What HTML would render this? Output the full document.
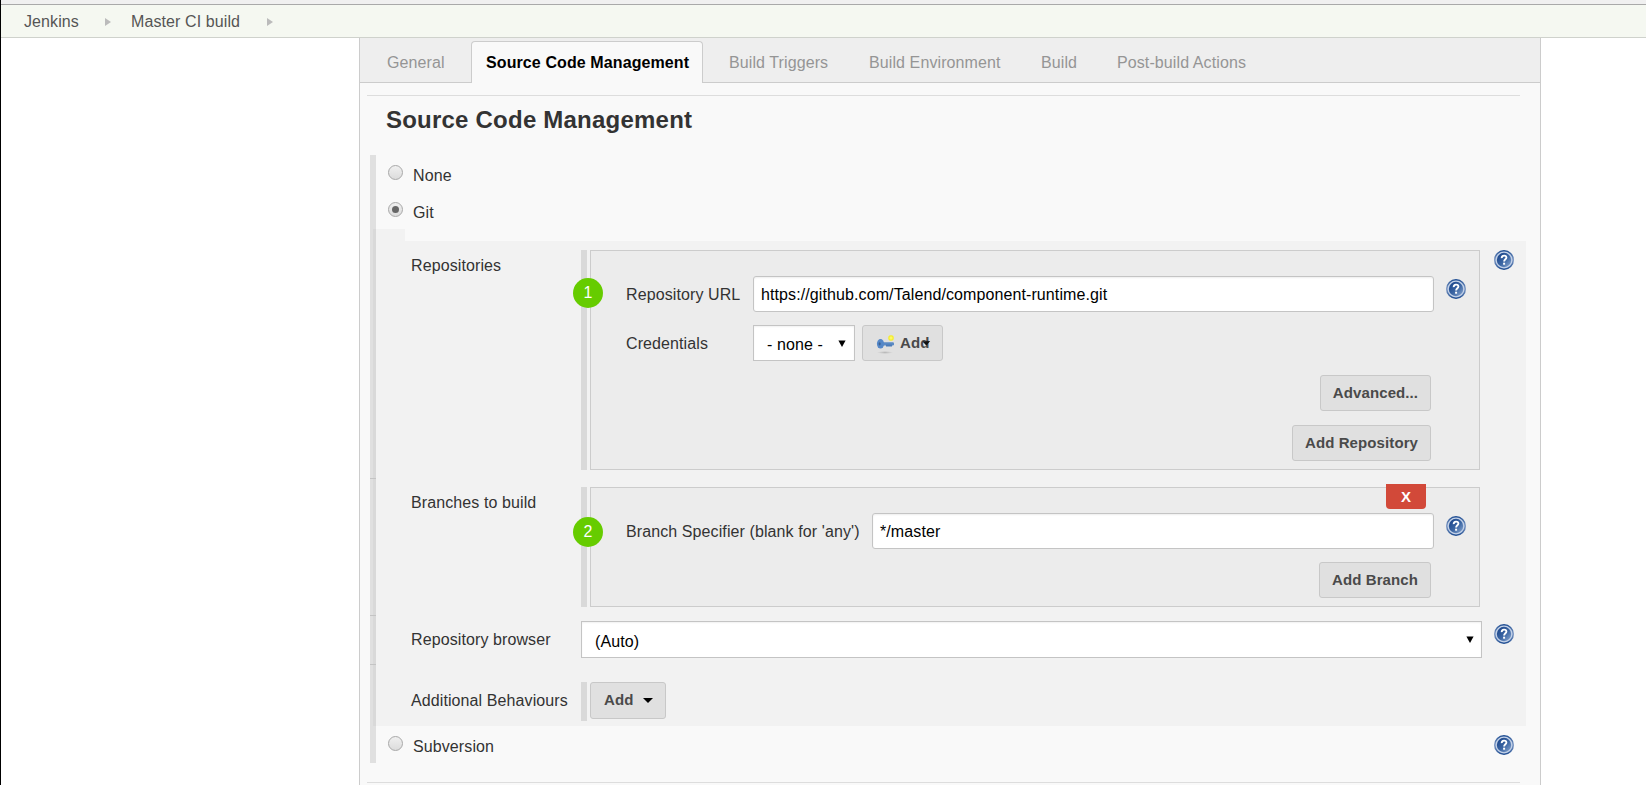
<!DOCTYPE html>
<html><head><meta charset="utf-8">
<style>
*{box-sizing:border-box;margin:0;padding:0}
html,body{width:1646px;height:785px;overflow:hidden;background:#fff;font-family:"Liberation Sans",sans-serif;font-size:16px;color:#333;letter-spacing:0.1px}
.a{position:absolute}
.t{position:absolute;white-space:nowrap;line-height:1}
#leftline{left:0;top:0;width:1px;height:785px;background:#000}
#topstrip{left:1px;top:0;width:1645px;height:4px;background:#f0f0f0}
#topline{left:1px;top:4px;width:1645px;height:1px;background:#a9a9a9}
#bc{left:1px;top:5px;width:1645px;height:33px;background:#f5f8f1;border-bottom:1px solid #cfd2cc}
.arr{position:absolute;width:0;height:0;border-top:4px solid transparent;border-bottom:4px solid transparent;border-left:6px solid #bbb}
#panel{left:359px;top:38px;width:1182px;height:760px;background:#f9f9f9;border-left:1px solid #ccc;border-right:1px solid #ccc}
#tabbar{left:360px;top:38px;width:1180px;height:45px;background:#eee;border-bottom:1px solid #ccc}
.tab{position:absolute;top:55px;color:#959595;font-size:16px;line-height:1}
#acttab{left:471px;top:41px;width:232px;height:42px;background:#f9f9f9;border:1px solid #ccc;border-bottom:none;border-radius:4px 4px 0 0}
.hr{position:absolute;height:1px;background:#ddd}
.radio{position:absolute;width:15px;height:15px;border-radius:50%;border:1px solid #a8a8a8;background:linear-gradient(#f0f0f0,#dcdcdc)}
.bar{position:absolute;background:#e0e0e0}
.box{position:absolute;background:#ececec;border:1px solid #ccc}
.green{position:absolute;width:30px;height:30px;border-radius:50%;background:#66cc00;color:#fff;font-size:16px;text-align:center;line-height:30px}
.input{position:absolute;background:#fff;border:1px solid #c4c4c4;border-radius:3px;height:36px;color:#000;font-size:16px;line-height:36px;padding-left:7px;box-shadow:inset 0 1px 2px rgba(0,0,0,.07)}
.select{position:absolute;background:#fff;border:1px solid #c4c4c4;height:36px;color:#000;font-size:16px;line-height:34px;box-shadow:inset 0 1px 2px rgba(0,0,0,.06)}
.btn{position:absolute;background:#e0e0e0;border:1px solid #c8c8c8;border-radius:3px;height:36px;font-weight:bold;font-size:15px;color:#4a4a4a;text-align:center;line-height:34px}
.help{position:absolute;width:20px;height:20px}
</style></head><body>
<svg width="0" height="0" style="position:absolute"><defs>
<linearGradient id="hg" x1="0" y1="0" x2="1" y2="1"><stop offset="0" stop-color="#143f86"/><stop offset="0.55" stop-color="#3d67a4"/><stop offset="1" stop-color="#8eaad2"/></linearGradient>
<linearGradient id="hr" x1="0" y1="0" x2="0" y2="1"><stop offset="0" stop-color="#1b4a90"/><stop offset="0.5" stop-color="#7d98c4"/><stop offset="1" stop-color="#1b4a90"/></linearGradient>
</defs></svg>

<div class="a" id="leftline"></div>
<div class="a" id="topstrip"></div>
<div class="a" id="topline"></div>
<div class="a" id="bc"></div>
<div class="t" style="left:24px;top:14px;color:#555">Jenkins</div>
<div class="arr" style="left:105px;top:18px"></div>
<div class="t" style="left:131px;top:14px;color:#555">Master CI build</div>
<div class="arr" style="left:267px;top:18px"></div>

<div class="a" id="panel"></div>
<div class="a" id="tabbar"></div>
<div class="a" id="acttab"></div>
<div class="tab" style="left:387px">General</div>
<div class="tab" style="left:486px;color:#000;font-weight:bold">Source Code Management</div>
<div class="tab" style="left:729px">Build Triggers</div>
<div class="tab" style="left:869px">Build Environment</div>
<div class="tab" style="left:1041px">Build</div>
<div class="tab" style="left:1117px">Post-build Actions</div>
<div class="hr" style="left:367px;top:95px;width:1153px"></div>

<div class="t" style="left:386px;top:108px;font-size:24px;font-weight:bold;color:#333;letter-spacing:0.22px">Source Code Management</div>


<!-- SCM section -->
<div class="bar" style="left:370px;top:155px;width:6px;height:608px"></div>
<div class="radio" style="left:388px;top:165px"></div>
<div class="t" style="left:413px;top:168px">None</div>
<div class="radio" style="left:388px;top:202px"><div style="position:absolute;left:3px;top:3px;width:7px;height:7px;border-radius:50%;background:#666"></div></div>
<div class="t" style="left:413px;top:205px">Git</div>

<div class="a" style="left:373px;top:229px;width:32px;height:497px;background:#f2f2f2"></div>
<div class="a" style="left:405px;top:241px;width:1121px;height:485px;background:#f2f2f2"></div>
<div class="a" style="left:373px;top:229px;width:3px;height:497px;background:#d9d9d9"></div>
<div class="a" style="left:370px;top:478px;width:6px;height:1px;background:#c4c4c4"></div>
<div class="a" style="left:370px;top:615px;width:6px;height:1px;background:#c4c4c4"></div>
<div class="a" style="left:370px;top:664px;width:6px;height:1px;background:#c4c4c4"></div>

<!-- Repositories -->
<div class="t" style="left:411px;top:258px">Repositories</div>
<div class="bar" style="left:581px;top:250px;width:6px;height:220px;background:#d9d9d9"></div>
<div class="box" style="left:590px;top:250px;width:890px;height:220px"></div>
<div class="green" style="left:573px;top:278px">1</div>
<div class="t" style="left:626px;top:287px">Repository URL</div>
<div class="input" style="left:753px;top:276px;width:681px">https://github.com/Talend/component-runtime.git</div>
<svg class="help" style="left:1446px;top:279px" viewBox="0 0 20 20"><circle cx="10" cy="10" r="10" fill="url(#hr)"/>
<circle cx="10" cy="10" r="8.5" fill="#c4d2e8"/>
<circle cx="10" cy="10" r="7.2" fill="url(#hg)"/>
<path d="M7.7 8.1 C7.6 4.9 12.4 4.8 12.4 7.5 C12.4 9.2 10.2 9.3 10.1 11.5" stroke="#fff" stroke-width="1.9" fill="none" stroke-linecap="butt"/>
<rect x="9.1" y="12.7" width="2" height="2" fill="#fff"/></svg>
<svg class="help" style="left:1494px;top:250px" viewBox="0 0 20 20"><circle cx="10" cy="10" r="10" fill="url(#hr)"/>
<circle cx="10" cy="10" r="8.5" fill="#c4d2e8"/>
<circle cx="10" cy="10" r="7.2" fill="url(#hg)"/>
<path d="M7.7 8.1 C7.6 4.9 12.4 4.8 12.4 7.5 C12.4 9.2 10.2 9.3 10.1 11.5" stroke="#fff" stroke-width="1.9" fill="none" stroke-linecap="butt"/>
<rect x="9.1" y="12.7" width="2" height="2" fill="#fff"/></svg>
<div class="t" style="left:626px;top:336px">Credentials</div>
<div class="select" style="left:753px;top:325px;width:102px;padding-left:13px;line-height:38px">- none -<svg class="a" style="left:84px;top:14px" width="8" height="8" viewBox="0 0 8 8"><path d="M0.4 0.4 H7.6 L4 7 Z" fill="#000"/></svg></div>
<div class="btn" style="left:862px;top:325px;width:81px;text-align:left;padding-left:37px">Add</div>
<svg class="a" style="left:875px;top:334px" width="22" height="22" viewBox="0 0 22 22">
<defs><radialGradient id="kg" cx="0.5" cy="0.5" r="0.5"><stop offset="0" stop-color="#ffff80"/><stop offset="0.6" stop-color="#f4ec30"/><stop offset="1" stop-color="#f4ec30" stop-opacity="0"/></radialGradient>
<radialGradient id="ksh" cx="0.5" cy="0.5" r="0.5"><stop offset="0" stop-color="#000" stop-opacity=".18"/><stop offset="1" stop-color="#000" stop-opacity="0"/></radialGradient></defs>
<ellipse cx="10" cy="18.5" rx="8" ry="1.5" fill="url(#ksh)"/>
<circle cx="16" cy="4" r="3.6" fill="url(#kg)"/>
<rect x="6" y="8.3" width="13" height="3.2" rx="1.2" fill="#5b8ac4"/>
<rect x="11" y="10.5" width="6" height="2" fill="#4d7cb8"/>
<ellipse cx="5.5" cy="9.8" rx="3.6" ry="4.8" fill="#5588c8"/>
<ellipse cx="4.6" cy="9.8" rx="1" ry="1.6" fill="#3b5f90"/>
</svg>
<svg class="a" style="left:920px;top:339px" width="12" height="8" viewBox="0 0 12 8"><path d="M2.5 2.6 L10.2 2.1 L6.4 6.4 Z" fill="#111"/></svg>
<div class="btn" style="left:1320px;top:375px;width:111px">Advanced...</div>
<div class="btn" style="left:1292px;top:425px;width:139px">Add Repository</div>

<!-- Branches -->
<div class="t" style="left:411px;top:495px">Branches to build</div>
<div class="bar" style="left:581px;top:487px;width:6px;height:120px;background:#d9d9d9"></div>
<div class="box" style="left:590px;top:487px;width:890px;height:120px"></div>
<div class="a" style="left:1386px;top:484px;width:40px;height:25px;background:#d24939;border-radius:0 0 4px 4px;color:#fff;font-weight:bold;font-size:15px;text-align:center;line-height:25px">X</div>
<div class="green" style="left:573px;top:517px">2</div>
<div class="t" style="left:626px;top:524px">Branch Specifier (blank for 'any')</div>
<div class="input" style="left:872px;top:513px;width:562px">*/master</div>
<svg class="help" style="left:1446px;top:516px" viewBox="0 0 20 20"><circle cx="10" cy="10" r="10" fill="url(#hr)"/>
<circle cx="10" cy="10" r="8.5" fill="#c4d2e8"/>
<circle cx="10" cy="10" r="7.2" fill="url(#hg)"/>
<path d="M7.7 8.1 C7.6 4.9 12.4 4.8 12.4 7.5 C12.4 9.2 10.2 9.3 10.1 11.5" stroke="#fff" stroke-width="1.9" fill="none" stroke-linecap="butt"/>
<rect x="9.1" y="12.7" width="2" height="2" fill="#fff"/></svg>
<div class="btn" style="left:1319px;top:562px;width:112px">Add Branch</div>

<!-- Repo browser -->
<div class="t" style="left:411px;top:632px">Repository browser</div>
<div class="select" style="left:581px;top:621px;width:901px;height:37px;padding-left:13px;line-height:39px">(Auto)<svg class="a" style="left:884px;top:14px" width="8" height="8" viewBox="0 0 8 8"><path d="M0.4 0.4 H7.6 L4 7 Z" fill="#000"/></svg></div>
<svg class="help" style="left:1494px;top:624px" viewBox="0 0 20 20"><circle cx="10" cy="10" r="10" fill="url(#hr)"/>
<circle cx="10" cy="10" r="8.5" fill="#c4d2e8"/>
<circle cx="10" cy="10" r="7.2" fill="url(#hg)"/>
<path d="M7.7 8.1 C7.6 4.9 12.4 4.8 12.4 7.5 C12.4 9.2 10.2 9.3 10.1 11.5" stroke="#fff" stroke-width="1.9" fill="none" stroke-linecap="butt"/>
<rect x="9.1" y="12.7" width="2" height="2" fill="#fff"/></svg>

<!-- Additional behaviours -->
<div class="t" style="left:411px;top:693px">Additional Behaviours</div>
<div class="bar" style="left:581px;top:682px;width:6px;height:39px;background:#d9d9d9"></div>
<div class="btn" style="left:590px;top:682px;width:76px;height:37px;text-align:left;padding-left:13px">Add<span style="position:absolute;left:52px;top:15px;width:0;height:0;border-left:5px solid transparent;border-right:5px solid transparent;border-top:5px solid #000"></span></div>

<!-- Subversion -->
<div class="radio" style="left:388px;top:736px"></div>
<div class="t" style="left:413px;top:739px">Subversion</div>
<svg class="help" style="left:1494px;top:735px" viewBox="0 0 20 20"><circle cx="10" cy="10" r="10" fill="url(#hr)"/>
<circle cx="10" cy="10" r="8.5" fill="#c4d2e8"/>
<circle cx="10" cy="10" r="7.2" fill="url(#hg)"/>
<path d="M7.7 8.1 C7.6 4.9 12.4 4.8 12.4 7.5 C12.4 9.2 10.2 9.3 10.1 11.5" stroke="#fff" stroke-width="1.9" fill="none" stroke-linecap="butt"/>
<rect x="9.1" y="12.7" width="2" height="2" fill="#fff"/></svg>
<div class="hr" style="left:367px;top:782px;width:1153px"></div>
</body></html>
